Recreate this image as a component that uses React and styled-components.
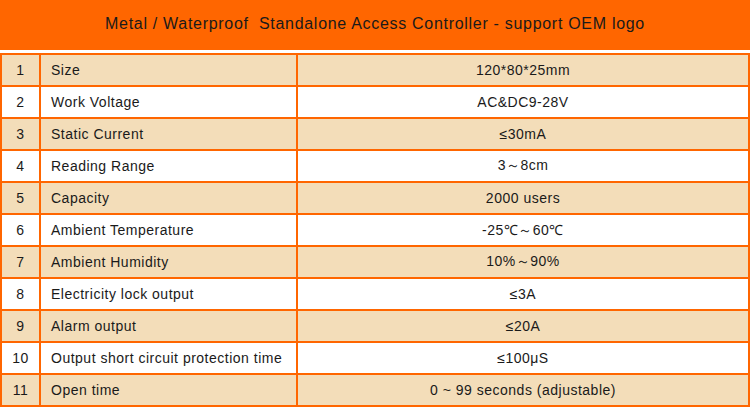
import React from 'react'
import styled, { createGlobalStyle } from 'styled-components'

const rows = [
    ['1', 'Size', '120*80*25mm'],
    ['2', 'Work Voltage', 'AC&DC9-28V'],
    ['3', 'Static Current', '≤30mA'],
    ['4', 'Reading Range', '3～8cm'],
    ['5', 'Capacity', '2000 users'],
    ['6', 'Ambient Temperature', '-25℃～60℃'],
    ['7', 'Ambient Humidity', '10%～90%'],
    ['8', 'Electricity lock output', '≤3A'],
    ['9', 'Alarm output', '≤20A'],
    ['10', 'Output short circuit protection time', '≤100μS'],
    ['11', 'Open time', '0 ~ 99 seconds (adjustable)'],
]

export default function App() {
  return (
    <>
        <GlobalStyle/>
        <Page>
            <Banner>Metal / Waterproof&nbsp; Standalone Access Controller - support OEM logo</Banner>
            <SpecTable>
                <colgroup>
                    <col style={{width: 39}}/>
                    <col style={{width: 257}}/>
                    <col/>
                </colgroup>
                <tbody>
                    {rows.map((r, i) => (
                        <Row key={r[0]} $shaded={i % 2 === 0}>
                            <NumCell>{r[0]}</NumCell>
                            <NameCell>{r[1]}</NameCell>
                            <ValueCell>{r[2]}</ValueCell>
                        </Row>
                    ))}
                </tbody>
            </SpecTable>
        </Page>
    </>
  )
}

const GlobalStyle = createGlobalStyle`
body{
    margin: 0;
    background: #fff;
    font-family: "Liberation Sans", Arial, sans-serif;
}
`
const Page = styled.div`
width: 750px;
height: 407px;
overflow: hidden;
`
const Banner = styled.div`
height: 50px;
background-color: #ff6600;
color: #1a1a1a;
font-size: 16px;
letter-spacing: 0.7px;
display: flex;
align-items: center;
justify-content: center;
padding-bottom: 2px;
box-sizing: border-box;
margin-bottom: 3px;
`
const SpecTable = styled.table`
width: 750px;
border-collapse: separate;
border-spacing: 0;
table-layout: fixed;
border-top: 2px solid #ff6600;
border-left: 2px solid #ff6600;
`
const Row = styled.tr`
background-color: ${props => props.$shaded ? '#f3ddb9' : '#fff'};
`
const Cell = styled.td`
height: 30px;
padding: 0;
border-right: 2px solid #ff6600;
border-bottom: 2px solid #ff6600;
font-size: 14px;
letter-spacing: 0.5px;
color: #1a1a1a;
white-space: nowrap;
`
const NumCell = styled(Cell)`
text-align: center;
`
const NameCell = styled(Cell)`
padding-left: 10px;
`
const ValueCell = styled(Cell)`
text-align: center;
`
